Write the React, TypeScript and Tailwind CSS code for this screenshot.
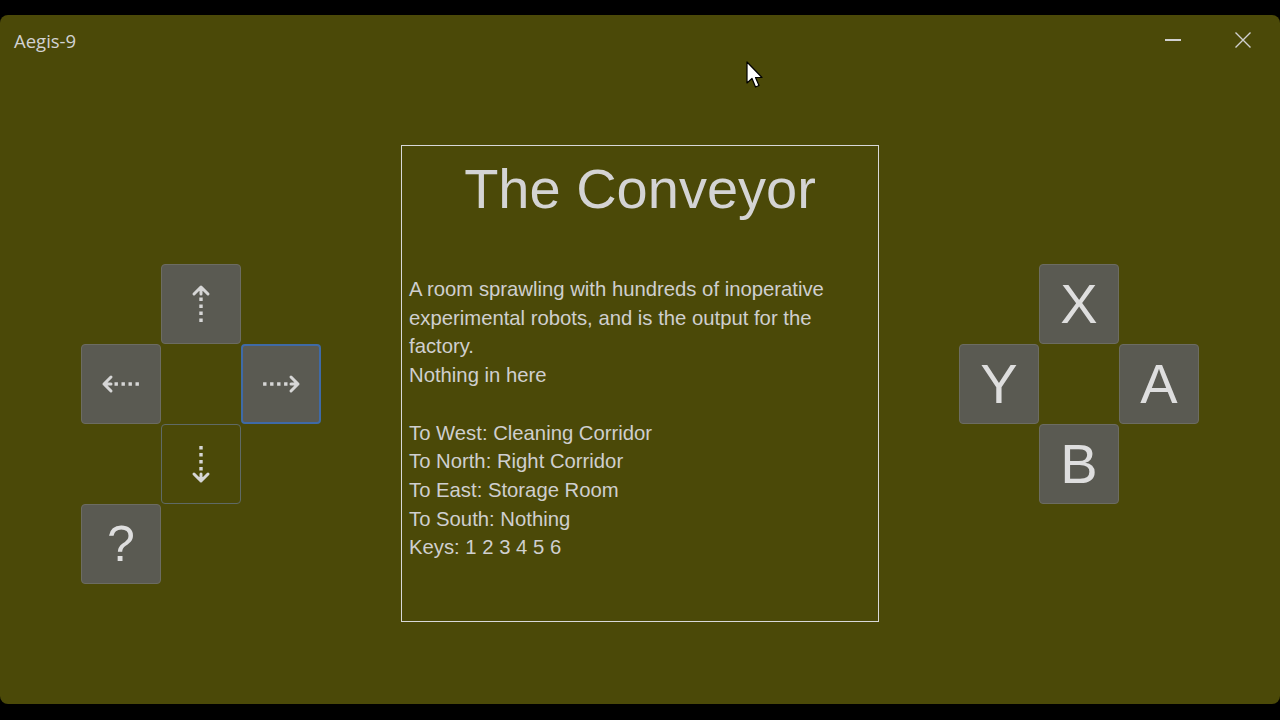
import React from 'react';

const pad = 'w-20 h-20 rounded-[4px] flex items-center justify-center';
const filled = 'bg-[#5a5a52] border border-[#6c6c62]';

function DotArrow({ rot }: { rot: string }) {
  return (
    <svg width="44" height="44" viewBox="0 0 44 44" className={rot}>
      <path d="M22 15.5 L22 41" stroke="#d6d6d6" strokeWidth="3.4" strokeDasharray="3.4 3.6" fill="none" />
      <path d="M22 5 L22 12 M15 12 L22 5 L29 12" stroke="#d6d6d6" strokeWidth="3" fill="none" strokeLinejoin="round" strokeLinecap="round" />
    </svg>
  );
}

function Letter({ ch }: { ch: string }) {
  return (
    <div className={`${pad} ${filled} text-[56px] leading-none text-[#dedede] font-['Liberation_Sans',Arial,sans-serif]`}>
      {ch}
    </div>
  );
}

export default function App() {
  const exits = [
    'To West: Cleaning Corridor',
    'To North: Right Corridor',
    'To East: Storage Room',
    'To South: Nothing',
    'Keys: 1 2 3 4 5 6',
  ];

  return (
    <div className="w-[1280px] h-[720px] bg-black pt-[15px] relative overflow-hidden">
      <div className="h-[689px] bg-[#4b4908] rounded-[8px] flex flex-col">
        {/* Title bar */}
        <div className="h-[54px] flex items-start justify-between">
          <span className="pl-[14px] pt-[14px] text-[18.5px] leading-[24px] text-[#d2d2d2] font-['Open_Sans',sans-serif]">
            Aegis-9
          </span>
          <div className="flex items-center gap-[53px] pr-[28px] pt-[16px]">
            <div className="w-[16px] h-[1.5px] bg-[#d0d0d0]" />
            <svg width="18" height="18" viewBox="0 0 18 18">
              <path d="M1.5 1.5 L16.5 16.5 M16.5 1.5 L1.5 16.5" stroke="#d0d0d0" strokeWidth="1.4" />
            </svg>
          </div>
        </div>

        {/* Content */}
        <div className="flex justify-center items-start gap-20 pt-[76px]">
          {/* D-pad */}
          <div className="grid grid-cols-[80px_80px_80px] grid-rows-[80px_80px_80px_80px] mt-[119px]">
            <div />
            <div className={`${pad} ${filled}`}>
              <DotArrow rot="" />
            </div>
            <div />
            <div className={`${pad} ${filled}`}>
              <DotArrow rot="-rotate-90" />
            </div>
            <div />
            <div className={`${pad} bg-[#5a5a52] border-2 border-[#3f6aa6]`}>
              <DotArrow rot="rotate-90" />
            </div>
            <div />
            <div className={`${pad} border border-[#5f6a66]`}>
              <DotArrow rot="rotate-180" />
            </div>
            <div />
            <div className={`${pad} ${filled} text-[50px] leading-none text-[#dedede] font-['Liberation_Sans',Arial,sans-serif]`}>
              ?
            </div>
          </div>

          {/* Room box */}
          <div className="w-[478px] h-[477px] border-[1.5px] border-[#d8d8d8] px-[7px] text-[#cfcfcf]">
            <h1 className="text-center text-[56px] leading-none pt-[15px] font-['Liberation_Sans',Arial,sans-serif] text-[#d4d4d4]">
              The Conveyor
            </h1>
            <div className="mt-[58px] text-[20.3px] leading-[28.7px] font-['Liberation_Sans',Arial,sans-serif]">
              <p>A room sprawling with hundreds of inoperative experimental robots, and is the output for the factory.</p>
              <p>Nothing in here</p>
              <p>&nbsp;</p>
              {exits.map((e) => (
                <p key={e}>{e}</p>
              ))}
            </div>
          </div>

          {/* Face buttons */}
          <div className="grid grid-cols-[80px_80px_80px] grid-rows-[80px_80px_80px] mt-[119px]">
            <div />
            <Letter ch="X" />
            <div />
            <Letter ch="Y" />
            <div />
            <Letter ch="A" />
            <div />
            <Letter ch="B" />
            <div />
          </div>
        </div>
      </div>

      {/* Mouse pointer */}
      <svg className="absolute left-[746px] top-[61px]" width="18" height="30" viewBox="0 0 18 30">
        <path d="M1 1 L1 22 L6 17.5 L9.5 26 L13 24.5 L9.5 16.5 L16 16.5 Z" fill="#ffffff" stroke="#000000" strokeWidth="1.2" strokeLinejoin="round" />
      </svg>
    </div>
  );
}
